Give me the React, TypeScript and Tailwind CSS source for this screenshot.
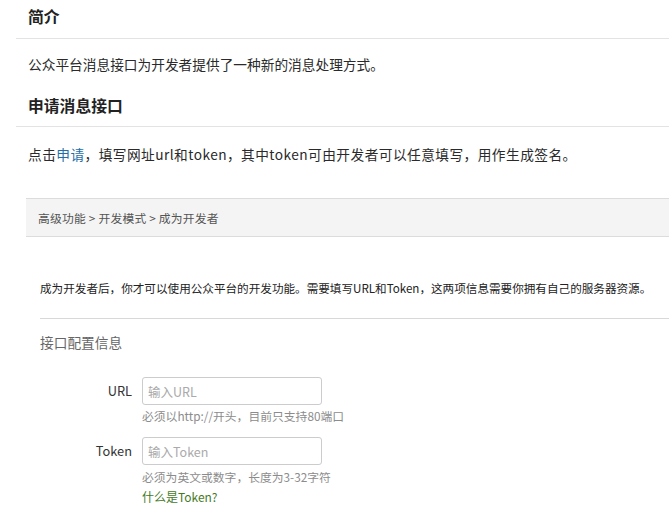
const font = { fontFamily: '"Noto Sans CJK SC", "Liberation Sans", sans-serif' };

const App = () => {
  return (
    <div className="w-[669px] h-[529px] bg-white text-[#333] overflow-hidden" style={font}>
      {/* docs part */}
      <div className="ml-4">
        <h2 className="pl-3 pt-[7px] pb-[11px] text-[15.8px] leading-[20px] font-bold text-[#222] border-b border-[#e3e3e3]">
          简介
        </h2>
        <p className="pl-3 mt-[15px] text-[13.7px] leading-[20px] text-[#2a2a2a]">
          公众平台消息接口为开发者提供了一种新的消息处理方式。
        </p>
        <h2 className="pl-3 pt-[22px] pb-[10px] text-[15.8px] leading-[20px] font-bold text-[#222] border-b border-[#e3e3e3]">
          申请消息接口
        </h2>
        <p className="pl-3 mt-[17px] text-[13.7px] leading-[20px] tracking-[0.45px] text-[#2a2a2a]">
          点击<span className="text-[#1f6fa8]">申请</span>，填写网址url和token，其中token可由开发者可以任意填写，用作生成签名。
        </p>
      </div>

      {/* screenshot of the console */}
      <div className="ml-[26px] mt-[34px]">
        <div className="h-[39px] border-y border-[#dcdcdc] bg-[#f4f4f4] pl-3 flex items-center text-[11.8px] tracking-[0.2px] text-[#555]">
          高级功能 &gt; 开发模式 &gt; 成为开发者
        </div>

        <div className="ml-[14px]">
          <p className="mt-[41px] pb-[20px] text-[11.6px] leading-[20px] text-[#222] border-b border-[#d8d8d8] whitespace-nowrap">
            成为开发者后，你才可以使用公众平台的开发功能。需要填写URL和Token，这两项信息需要你拥有自己的服务器资源。
          </p>
          <div className="mt-[13px] text-[13.7px] leading-[20px] text-[#666]">接口配置信息</div>

          <div className="mt-[25px] grid grid-cols-[92px_180px] gap-x-[10px] items-start">
            <div className="h-[28px] flex items-center justify-end text-[12.8px] text-[#333]">URL</div>
            <div>
              <input
                className="w-[180px] h-[28px] border border-[#cccccc] rounded-[3px] px-[5px] text-[12.5px] text-[#333] placeholder:text-[#aaa] outline-none"
                placeholder="输入URL"
              />
              <div className="mt-[2px] text-[11.8px] leading-[18px] text-[#8c8c8c] whitespace-nowrap">
                必须以http://开头，目前只支持80端口
              </div>
            </div>

            <div className="mt-[12px] h-[28px] flex items-center justify-end text-[12.8px] text-[#333]">Token</div>
            <div className="mt-[12px]">
              <input
                className="w-[180px] h-[28px] border border-[#cccccc] rounded-[3px] px-[5px] text-[12.5px] text-[#333] placeholder:text-[#aaa] outline-none"
                placeholder="输入Token"
              />
              <div className="mt-[3px] text-[11.8px] leading-[18px] text-[#8c8c8c] whitespace-nowrap">
                必须为英文或数字，长度为3-32字符
              </div>
              <a className="block mt-[2px] text-[12px] leading-[18px] text-[#457a1f]">什么是Token?</a>
            </div>
          </div>
        </div>
      </div>
    </div>
  );
};

export default App;
